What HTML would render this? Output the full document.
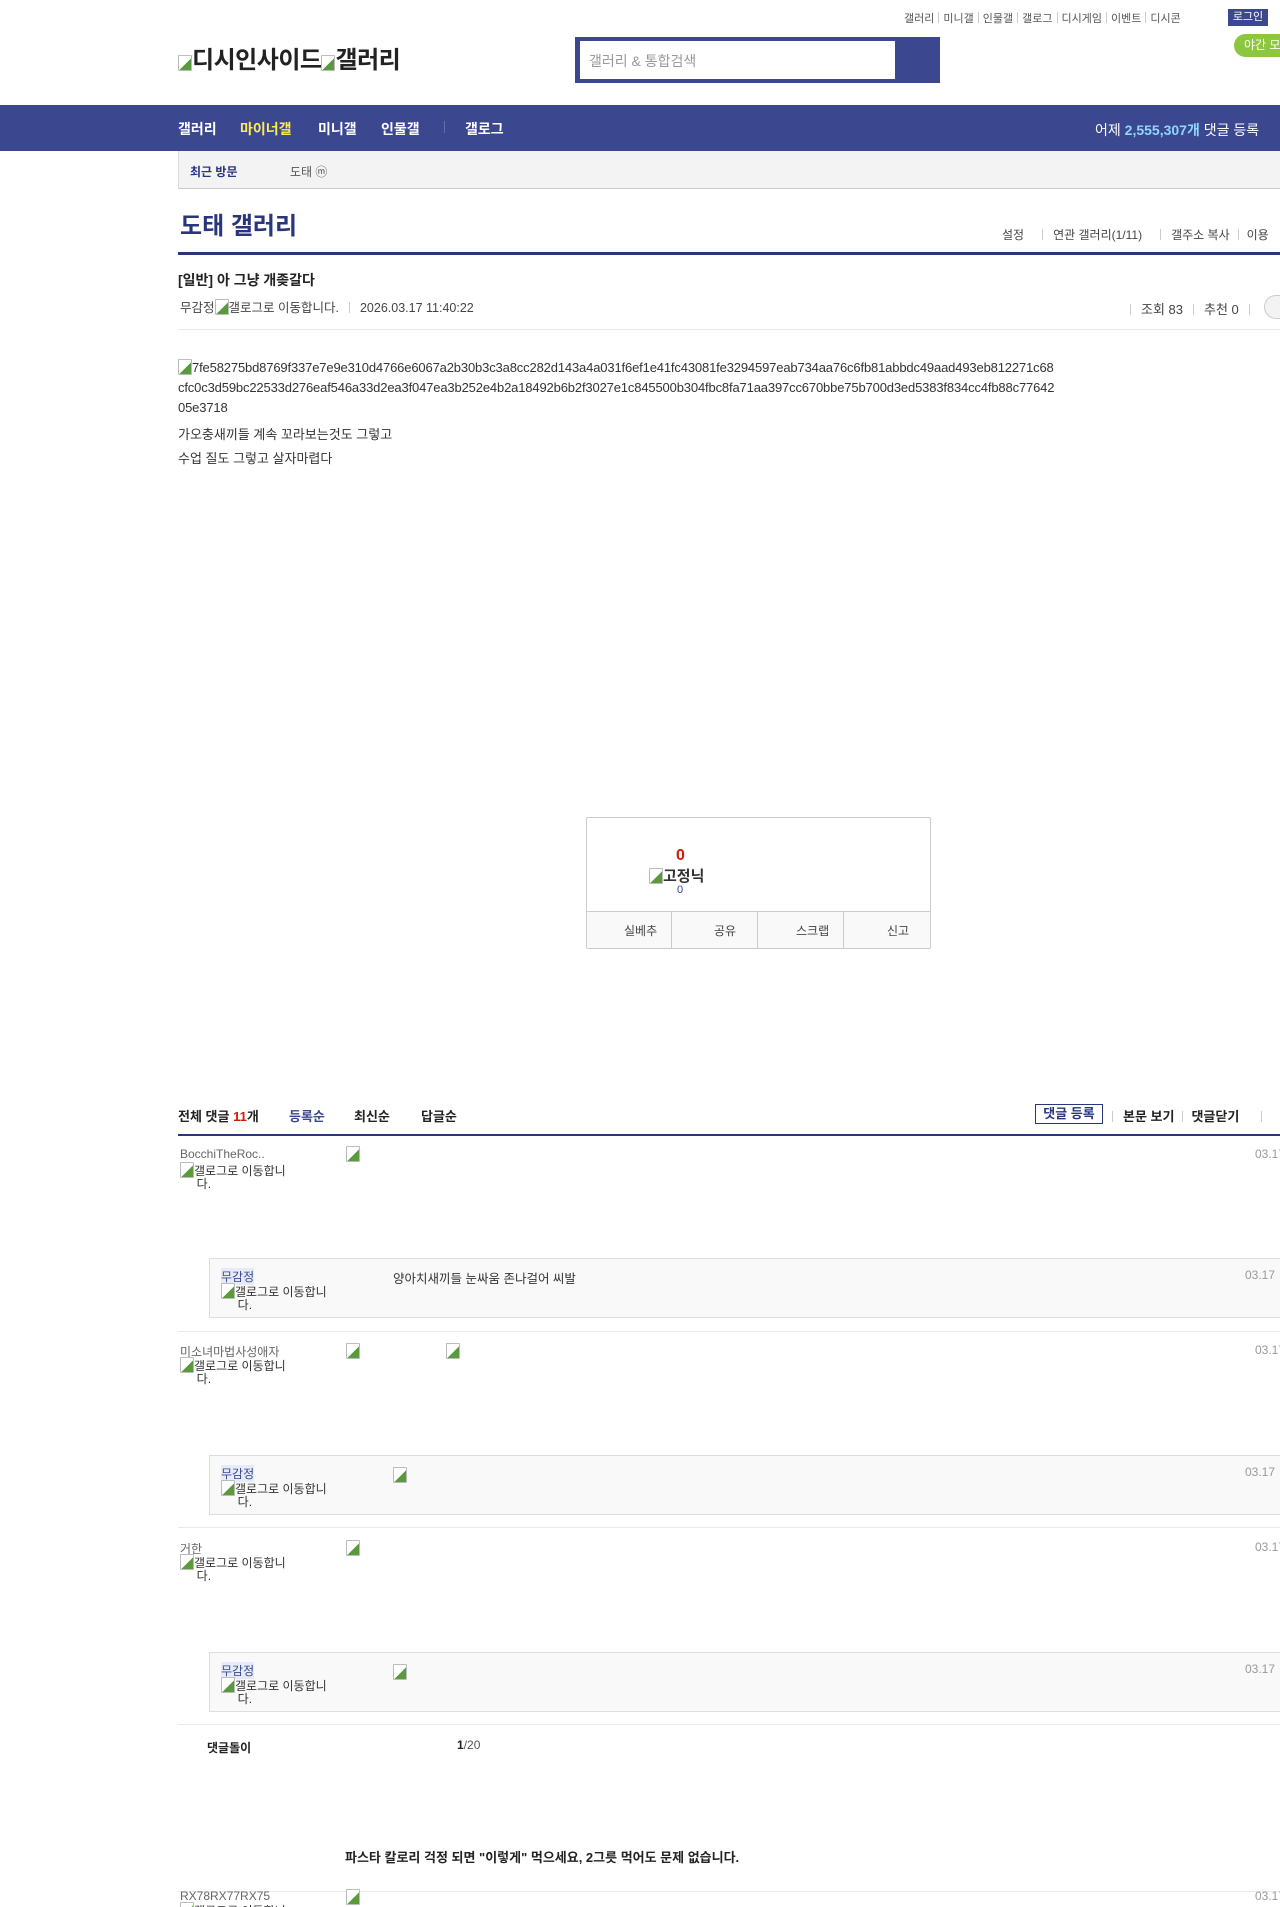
<!DOCTYPE html>
<html><head><meta charset="utf-8">
<style>
html,body{margin:0;padding:0;width:1280px;height:1907px;overflow:hidden;background:#fff;}
body{position:relative;font-family:"Liberation Sans","Noto Sans CJK KR",sans-serif;color:#333;font-size:13px;}
.a{position:absolute;white-space:nowrap;}
.bi{display:inline-block;width:14px;height:16px;border:1px solid #bbb;border-radius:1px;vertical-align:-3px;background:linear-gradient(135deg,#fff 55%,#5a9a3c 56%);box-sizing:border-box;}
.sep{display:inline-block;width:1px;height:11px;background:#ccc;margin:0 6px;vertical-align:-1px;}
.hr{position:absolute;left:178px;width:1102px;height:1px;background:#e9e9e9;}
.rbox{position:absolute;left:209px;width:1100px;height:58px;background:#f9f9f9;border:1px solid #ddd;}
.nick{color:#666;font-size:12px;}
.glog{font-size:12px;color:#333;line-height:13px;}
.date{color:#999;font-size:12px;}
</style></head><body>

<div class="a" style="left:904px;top:10px;font-size:11px;color:#555;">갤러리<span class="sep" style="margin:0 4px"></span>미니갤<span class="sep" style="margin:0 4px"></span>인물갤<span class="sep" style="margin:0 4px"></span>갤로그<span class="sep" style="margin:0 4px"></span>디시게임<span class="sep" style="margin:0 4px"></span>이벤트<span class="sep" style="margin:0 4px"></span>디시콘</div>
<div class="a" style="left:1228px;top:9px;width:40px;height:17px;background:#3b4890;color:#fff;font-size:11px;line-height:17px;text-align:center;">로그인</div>
<div class="a" style="left:1234px;top:34px;width:60px;height:23px;background:#8dc63f;border-radius:12px;color:#fff;font-size:12px;line-height:23px;padding-left:10px;">야간 모</div>

<div class="a" style="left:178px;top:40px;font-size:24px;color:#222;font-weight:bold;letter-spacing:-0.5px;"><span class="bi"></span>디시인사이드<span class="bi"></span>갤러리</div>

<div class="a" style="left:575px;top:37px;width:365px;height:46px;background:#3b4890;"></div>
<div class="a" style="left:580px;top:41px;width:315px;height:38px;background:#fff;"></div>
<div class="a" style="left:589px;top:51px;font-size:14px;color:#999;">갤러리 &amp; 통합검색</div>

<div class="a" style="left:0;top:105px;width:1280px;height:46px;background:#3b4890;"></div>
<div class="a" style="left:178px;top:119px;font-size:14px;font-weight:bold;color:#fff;">갤러리</div>
<div class="a" style="left:240px;top:119px;font-size:14px;font-weight:bold;color:#ffed4a;">마이너갤</div>
<div class="a" style="left:318px;top:119px;font-size:14px;font-weight:bold;color:#fff;">미니갤</div>
<div class="a" style="left:381px;top:119px;font-size:14px;font-weight:bold;color:#fff;">인물갤</div>
<div class="a" style="left:444px;top:121px;width:1px;height:12px;background:#6470ad;"></div>
<div class="a" style="left:465px;top:119px;font-size:14px;font-weight:bold;color:#fff;">갤로그</div>
<div class="a" style="left:1095px;top:120px;font-size:14px;color:#fff;">어제 <b style="color:#8fd6ff">2,555,307개</b> 댓글 등록</div>

<div class="a" style="left:178px;top:151px;width:1102px;height:37px;background:#f3f3f3;border-left:1px solid #ddd;border-bottom:1px solid #ccc;"></div>
<div class="a" style="left:190px;top:163px;font-size:12px;font-weight:bold;color:#29367c;">최근 방문</div>
<div class="a" style="left:290px;top:163px;font-size:12px;color:#555;">도태 ⓜ</div>

<div class="a" style="left:180px;top:206px;font-size:24px;font-weight:bold;color:#29367c;">도태 갤러리</div>
<div class="a" style="left:1002px;top:226px;font-size:12px;color:#444;">설정<span class="sep" style="margin:0 10px 0 18px"></span>연관 갤러리(1/11)<span class="sep" style="margin:0 10px 0 18px"></span>갤주소 복사<span class="sep" style="margin:0 8px"></span>이용</div>
<div class="a" style="left:178px;top:252px;width:1102px;height:3px;background:#29367c;"></div>

<div class="a" style="left:178px;top:270px;font-size:14px;font-weight:bold;color:#222;">[일반] 아 그냥 개좆갈다</div>
<div class="a" style="left:180px;top:297px;font-size:12.5px;color:#444;">무감정<span class="bi"></span>갤로그로 이동합니다.<span class="sep" style="margin:0 10px"></span>2026.03.17 11:40:22</div>
<div class="a" style="left:1130px;top:299px;font-size:13px;color:#444;"><span class="sep" style="margin:0 10px 0 0"></span>조회 83<span class="sep" style="margin:0 10px"></span>추천 0<span class="sep" style="margin:0 10px"></span></div>
<div class="a" style="left:1264px;top:295px;width:30px;height:22px;border:1px solid #ccc;border-radius:12px;background:#f3f3f3;"></div>
<div class="hr" style="top:329px;"></div>

<div class="a" style="left:178px;top:358px;font-size:13px;line-height:20px;color:#333;letter-spacing:-0.15px;"><span class="bi"></span>7fe58275bd8769f337e7e9e310d4766e6067a2b30b3c3a8cc282d143a4a031f6ef1e41fc43081fe3294597eab734aa76c6fb81abbdc49aad493eb812271c68<br>cfc0c3d59bc22533d276eaf546a33d2ea3f047ea3b252e4b2a18492b6b2f3027e1c845500b304fbc8fa71aa397cc670bbe75b700d3ed5383f834cc4fb88c77642<br>05e3718</div>
<div class="a" style="left:178px;top:424px;font-size:13px;">가오충새끼들 계속 꼬라보는것도 그렇고</div>
<div class="a" style="left:178px;top:448px;font-size:13px;">수업 질도 그렇고 살자마렵다</div>

<div class="a" style="left:586px;top:817px;width:343px;height:130px;border:1px solid #ccc;border-radius:2px;"></div>
<div class="a" style="left:587px;top:911px;width:343px;height:36px;background:#f9f9f9;border-top:1px solid #ccc;"></div>
<div class="a" style="left:671px;top:911px;width:1px;height:37px;background:#ccc;"></div>
<div class="a" style="left:757px;top:911px;width:1px;height:37px;background:#ccc;"></div>
<div class="a" style="left:843px;top:911px;width:1px;height:37px;background:#ccc;"></div>
<div class="a" style="left:624px;top:922px;font-size:12px;color:#444;">실베추</div>
<div class="a" style="left:714px;top:922px;font-size:12px;color:#444;">공유</div>
<div class="a" style="left:796px;top:922px;font-size:12px;color:#444;">스크랩</div>
<div class="a" style="left:887px;top:922px;font-size:12px;color:#444;">신고</div>
<div class="a" style="left:676px;top:847px;font-size:16px;font-weight:bold;color:#d31900;">0</div>
<div class="a" style="left:649px;top:865px;font-size:15px;font-weight:bold;color:#333;"><span class="bi"></span>고정닉</div>
<div class="a" style="left:677px;top:884px;font-size:11px;color:#3b4890;">0</div>

<div class="a" style="left:178px;top:1106px;font-size:13px;font-weight:bold;color:#222;">전체 댓글 <span style="color:#d31900">11</span>개</div>
<div class="a" style="left:289px;top:1106px;font-size:13px;font-weight:bold;color:#3b4890;">등록순</div>
<div class="a" style="left:354px;top:1106px;font-size:13px;font-weight:bold;color:#222;">최신순</div>
<div class="a" style="left:421px;top:1106px;font-size:13px;font-weight:bold;color:#222;">답글순</div>
<div class="a" style="left:1035px;top:1104px;width:66px;height:18px;border:1px solid #29367c;font-size:13px;font-weight:bold;color:#29367c;text-align:center;line-height:18px;">댓글 등록</div>
<div class="a" style="left:1112px;top:1106px;font-size:13px;font-weight:bold;color:#222;"><span class="sep" style="margin:0 10px 0 0"></span>본문 보기<span class="sep" style="margin:0 8px"></span>댓글닫기<span class="sep" style="margin:0 0 0 22px"></span></div>
<div class="a" style="left:178px;top:1134px;width:1102px;height:2px;background:#29367c;"></div>

<div class="a nick" style="left:180px;top:1147px;">BocchiTheRoc..</div>
<div class="a glog" style="left:180px;top:1162px;"><span class="bi"></span>갤로그로 이동합니<br>&nbsp;&nbsp;&nbsp;&nbsp;&nbsp;다.</div>
<div class="a" style="left:346px;top:1146px;"><span class="bi"></span></div>
<div class="a date" style="left:1255px;top:1147px;">03.17</div>
<div class="rbox" style="top:1258px;"></div>
<div class="a nick" style="left:221px;top:1268px;color:#3b4890;background:#e5ebf7;">무감정</div>
<div class="a glog" style="left:221px;top:1283px;"><span class="bi"></span>갤로그로 이동합니<br>&nbsp;&nbsp;&nbsp;&nbsp;&nbsp;다.</div>
<div class="a" style="left:393px;top:1268px;font-size:12.5px;color:#333;">양아치새끼들 눈싸움 존나걸어 씨발</div>
<div class="a date" style="left:1245px;top:1268px;">03.17</div>
<div class="hr" style="top:1331px;"></div>

<div class="a nick" style="left:180px;top:1343px;">미소녀마법사성애자</div>
<div class="a glog" style="left:180px;top:1357px;"><span class="bi"></span>갤로그로 이동합니<br>&nbsp;&nbsp;&nbsp;&nbsp;&nbsp;다.</div>
<div class="a" style="left:346px;top:1343px;"><span class="bi"></span></div>
<div class="a" style="left:446px;top:1343px;"><span class="bi"></span></div>
<div class="a date" style="left:1255px;top:1343px;">03.17</div>
<div class="rbox" style="top:1455px;"></div>
<div class="a nick" style="left:221px;top:1465px;color:#3b4890;background:#e5ebf7;">무감정</div>
<div class="a glog" style="left:221px;top:1480px;"><span class="bi"></span>갤로그로 이동합니<br>&nbsp;&nbsp;&nbsp;&nbsp;&nbsp;다.</div>
<div class="a" style="left:393px;top:1467px;"><span class="bi"></span></div>
<div class="a date" style="left:1245px;top:1465px;">03.17</div>
<div class="hr" style="top:1527px;"></div>

<div class="a nick" style="left:180px;top:1540px;">거한</div>
<div class="a glog" style="left:180px;top:1554px;"><span class="bi"></span>갤로그로 이동합니<br>&nbsp;&nbsp;&nbsp;&nbsp;&nbsp;다.</div>
<div class="a" style="left:346px;top:1540px;"><span class="bi"></span></div>
<div class="a date" style="left:1255px;top:1540px;">03.17</div>
<div class="rbox" style="top:1652px;"></div>
<div class="a nick" style="left:221px;top:1662px;color:#3b4890;background:#e5ebf7;">무감정</div>
<div class="a glog" style="left:221px;top:1677px;"><span class="bi"></span>갤로그로 이동합니<br>&nbsp;&nbsp;&nbsp;&nbsp;&nbsp;다.</div>
<div class="a" style="left:393px;top:1664px;"><span class="bi"></span></div>
<div class="a date" style="left:1245px;top:1662px;">03.17</div>
<div class="hr" style="top:1724px;"></div>

<div class="a" style="left:207px;top:1739px;font-size:12px;font-weight:bold;color:#222;">댓글돌이</div>
<div class="a" style="left:457px;top:1738px;font-size:12px;color:#555;"><b style="color:#222">1</b>/20</div>
<div class="a" style="left:345px;top:1847px;font-size:13px;font-weight:bold;color:#222;">파스타 칼로리 걱정 되면 "이렇게" 먹으세요, 2그릇 먹어도 문제 없습니다.</div>
<div class="hr" style="top:1891px;"></div>
<div class="a nick" style="left:180px;top:1889px;">RX78RX77RX75</div>
<div class="a" style="left:346px;top:1889px;"><span class="bi"></span></div>
<div class="a date" style="left:1255px;top:1889px;">03.17</div>
<div class="a glog" style="left:180px;top:1902px;"><span class="bi"></span>갤로그로 이동합니</div>

</body></html>
